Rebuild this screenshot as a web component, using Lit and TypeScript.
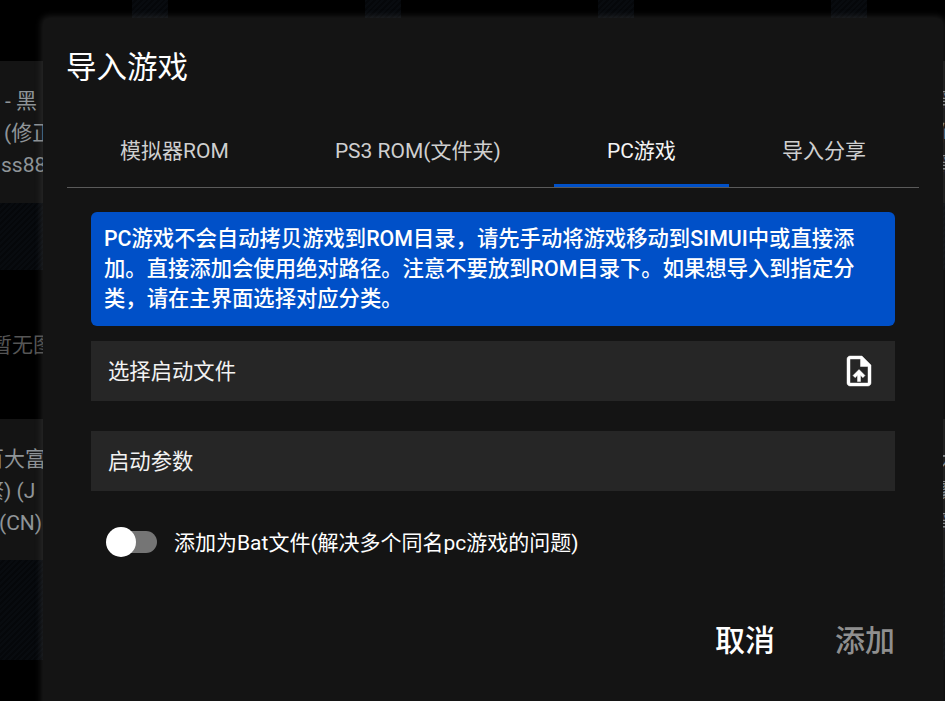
import { LitElement, css, html } from "lit";
import { customElement, state } from "lit/decorators.js";

@customElement("game-backdrop")
export class GameBackdrop extends LitElement {
  static styles = css`
    :host {
      position: absolute;
      inset: 0;
      display: flex;
      flex-direction: column;
      background: #000;
      overflow: hidden;
      font-family: Roboto, "Noto Sans CJK SC", sans-serif;
      font-size: 21px;
      line-height: 32px;
      color: #8f9498;
    }
    .gap {
      height: 61px;
      display: flex;
      padding-left: 132px;
      gap: 197px;
    }
    .thumb {
      width: 36px;
      background: repeating-linear-gradient(135deg, #080b0f 0 2px, #05070a 2px 4px);
    }
    .info {
      height: 142px;
      background: #141414;
      padding-top: 24px;
      box-sizing: border-box;
      display: flex;
      justify-content: space-between;
    }
    .info.low {
      height: 141px;
    }
    .stripes {
      height: 67px;
      background: repeating-linear-gradient(135deg, #080b0f 0 2px, #05070a 2px 4px);
    }
    .stripes.tall {
      height: 100px;
    }
    .empty {
      height: 149px;
      display: flex;
      align-items: center;
      color: #555;
    }
    .line {
      white-space: nowrap;
    }
    .a {
      margin-left: 5px;
    }
    .b {
      margin-left: 4px;
    }
    .c {
      margin-left: 1px;
    }
    .d {
      margin-left: -9px;
    }
    .e {
      margin-left: -17px;
    }
    .f {
      margin-left: -1px;
    }
    .right {
      width: 7px;
      overflow: hidden;
    }
  `;

  render() {
    return html`
      <div class="gap">
        <div class="thumb"></div>
        <div class="thumb"></div>
        <div class="thumb"></div>
        <div class="thumb"></div>
      </div>
      <div class="info">
        <div>
          <div class="line a">- 黑</div>
          <div class="line b">(修正</div>
          <div class="line c">ss88</div>
        </div>
        <div class="right">
          <div class="line">黑</div>
          <div class="line">修</div>
          <div class="line">黑</div>
        </div>
      </div>
      <div class="stripes"></div>
      <div class="empty"><span class="d">暂无图</span></div>
      <div class="info low">
        <div>
          <div class="line e">百大富</div>
          <div class="line e">繁) (J</div>
          <div class="line f">(CN)</div>
        </div>
        <div class="right">
          <div class="line">大</div>
          <div class="line">繁</div>
          <div class="line">黑</div>
        </div>
      </div>
      <div class="stripes tall"></div>
    `;
  }
}

@customElement("app-root")
export class AppRoot extends LitElement {
  static styles = css`
    :host {
      display: block;
      position: relative;
      height: 701px;
      overflow: hidden;
      font-family: Roboto, "Noto Sans CJK SC", sans-serif;
      color: #fff;
    }

    .dialog {
      position: absolute;
      left: 43px;
      top: 18px;
      width: 900px;
      height: 720px;
      box-sizing: border-box;
      padding: 24px;
      background: #141414;
      border-radius: 6px;
      box-shadow: 0 0 6px 2px rgba(90, 90, 90, 0.3);
    }

    .title {
      font-size: 30.5px;
      font-weight: 400;
      line-height: 52px;
      height: 50px;
      margin-left: -1px;
    }

    .tabs {
      display: flex;
      margin-top: 30px;
      height: 65px;
      border-bottom: 1px solid #5a5a5a;
    }

    .tab {
      flex: 1 1 auto;
      display: flex;
      align-items: center;
      justify-content: center;
      box-sizing: border-box;
      padding-bottom: 9px;
      font-size: 21px;
      font-weight: 400;
      color: #cfcfcf;
      border-bottom: 3px solid transparent;
    }

    .tab.active {
      color: #f4f4f4;
      border-bottom-color: #0050c8;
    }

    .body {
      margin: 24px 24px 0;
      display: flex;
      flex-direction: column;
    }

    .alert {
      background: #0050c8;
      border-radius: 6px;
      padding: 12px 13px;
      font-size: 21.33px;
      font-weight: 500;
      line-height: 30px;
      height: 114px;
      box-sizing: border-box;
    }

    .field {
      height: 60px;
      background: #262626;
      display: flex;
      align-items: center;
      justify-content: space-between;
      padding: 0 18px 0 17px;
      font-size: 21.33px;
      font-weight: 400;
      color: #f2f2f2;
    }

    .field span {
      margin-top: -3px;
    }

    .field.first {
      margin-top: 15px;
    }

    .field.second {
      margin-top: 30px;
    }

    .field svg {
      width: 36px;
      height: 36px;
      fill: #fff;
      stroke: #fff;
      stroke-width: 0.3;
    }

    .switch-row {
      display: flex;
      align-items: center;
      margin: 32px 0 0 15px;
      height: 38px;
      font-size: 21px;
      font-weight: 400;
    }

    .switch-row span {
      margin-top: -2px;
    }

    .switch {
      position: relative;
      width: 51px;
      height: 22px;
      margin-right: 17px;
      cursor: pointer;
    }

    .track {
      position: absolute;
      left: 10px;
      right: 0;
      top: 0;
      bottom: 0;
      border-radius: 11px;
      background: #757575;
    }

    .knob {
      position: absolute;
      left: 0;
      top: -4px;
      width: 30px;
      height: 30px;
      border-radius: 50%;
      background: #fff;
    }

    .switch.on .knob {
      left: 21px;
    }

    .actions {
      display: flex;
      justify-content: flex-end;
      gap: 60px;
      margin-top: 55px;
      font-size: 30px;
      font-weight: 500;
      line-height: 50px;
    }

    .add {
      color: #8f8f8f;
    }
  `;

  @state()
  batFile = false;

  render() {
    const tabs = ["模拟器ROM", "PS3 ROM(文件夹)", "PC游戏", "导入分享"];
    return html`
      <game-backdrop></game-backdrop>
      <div class="dialog">
        <div class="title">导入游戏</div>
        <div class="tabs">
          ${tabs.map((t, i) => html`<div class="tab ${i === 2 ? "active" : ""}">${t}</div>`)}
        </div>
        <div class="body">
          <div class="alert">
            PC游戏不会自动拷贝游戏到ROM目录，请先手动将游戏移动到SIMUI中或直接添加。直接添加会使用绝对路径。注意不要放到ROM目录下。如果想导入到指定分类，请在主界面选择对应分类。
          </div>
          <div class="field first">
            <span>选择启动文件</span>
            <svg viewBox="0 0 24 24">
              <path d="M14 2H6c-1.1 0-1.99.9-1.99 2L4 20c0 1.1.89 2 1.99 2H18c1.1 0 2-.9 2-2V8l-6-6zm4 18H6V4h7v5h5v11zM8 15.01l1.41 1.41L11 14.84V19h2v-4.16l1.59 1.59L16 15.01 12.01 11 8 15.01z" />
            </svg>
          </div>
          <div class="field second"><span>启动参数</span></div>
          <div class="switch-row">
            <div class="switch ${this.batFile ? "on" : ""}" @click=${() => (this.batFile = !this.batFile)}>
              <div class="track"></div>
              <div class="knob"></div>
            </div>
            <span>添加为Bat文件(解决多个同名pc游戏的问题)</span>
          </div>
          <div class="actions">
            <span>取消</span>
            <span class="add">添加</span>
          </div>
        </div>
      </div>
    `;
  }
}
